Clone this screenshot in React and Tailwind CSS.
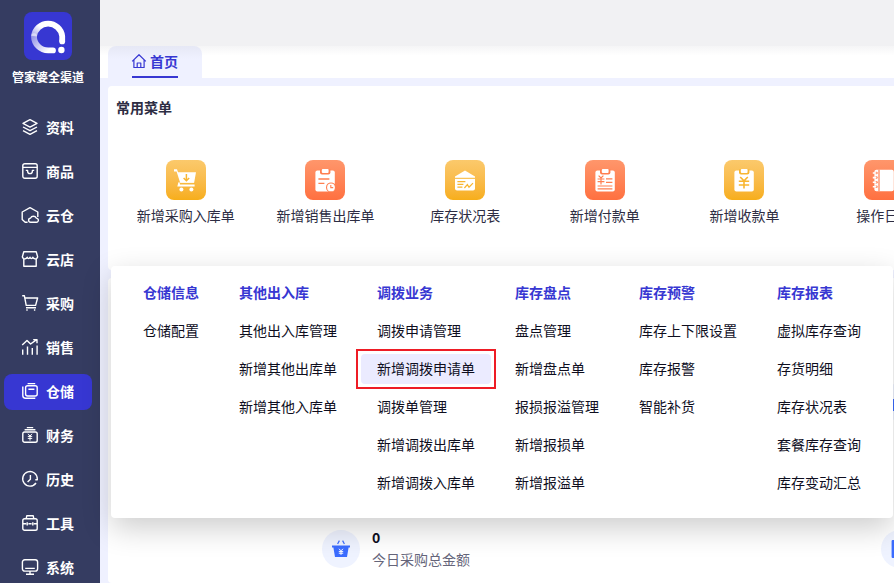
import React from 'react';

const quickLinks = [
  { label: '新增采购入库单', icon: 'purchase', tone: 'amber' },
  { label: '新增销售出库单', icon: 'sale', tone: 'orange' },
  { label: '库存状况表', icon: 'stock', tone: 'amber' },
  { label: '新增付款单', icon: 'pay', tone: 'orange' },
  { label: '新增收款单', icon: 'receive', tone: 'amber' },
  { label: '操作日志', icon: 'log', tone: 'orange' },
];

const menuGroups = [
  { title: '仓储信息', items: ['仓储配置'] },
  { title: '其他出入库', items: ['其他出入库管理', '新增其他出库单', '新增其他入库单'] },
  { title: '调拨业务', items: ['调拨申请管理', '新增调拨申请单', '调拨单管理', '新增调拨出库单', '新增调拨入库单'] },
  { title: '库存盘点', items: ['盘点管理', '新增盘点单', '报损报溢管理', '新增报损单', '新增报溢单'] },
  { title: '库存预警', items: ['库存上下限设置', '库存报警', '智能补货'] },
  { title: '库存报表', items: ['虚拟库存查询', '存货明细', '库存状况表', '套餐库存查询', '库存变动汇总'] },
];

const navItems = [
  {
    label: '资料',
    icon: (
      <>
        <path d="M8 .7 15 4.4 8 8.1 1 4.4z" />
        <path d="M1 8l7 3.7L15 8M1 11.6l7 3.7 7-3.7" />
      </>
    ),
  },
  {
    label: '商品',
    icon: (
      <>
        <rect x=".8" y=".7" width="14.4" height="14.6" rx="2" />
        <path d="M1 4.4h14M3.8 7.4h1.8v.8a2.4 2.4 0 0 0 4.8 0v-.8h1.8" />
      </>
    ),
  },
  {
    label: '云仓',
    icon: (
      <>
        <path d="M5.6 15.3H3.2L.2 12.4V5L8 .7 15.8 5v5" />
        <path d="M8.8 15.3a2.1 2.1 0 0 1-.2-4.2 3 3 0 0 1 5.6 0 2.1 2.1 0 0 1 .2 4.2z" />
      </>
    ),
  },
  {
    label: '云店',
    icon: (
      <>
        <path d="M2.2 7.6C.8 7.2.2 6.6.4 5.6L1.8.7h12.4l1.4 4.9c.2 1-.4 1.6-1.8 2" />
        <path d="M2.2 7.6c1.2.4 2.4-.2 3-1.4.8 1.8 2 1.8 2.8 0 .8 1.8 2 1.8 2.8 0 .6 1.2 1.8 1.8 3 1.4M1.8 8v7.3h12.4V8" />
      </>
    ),
  },
  {
    label: '采购',
    icon: (
      <>
        <path d="M.2.8h2.2l1.8 9.6h9.4L15.6 3H3M4 12.8h10" />
        <path d="M5 14.2v1.6M12.6 14.2v1.6" />
      </>
    ),
  },
  {
    label: '销售',
    icon: (
      <>
        <path d="M.2 6 5 1.4l3.6 3.6L14.6.6M11.2.6h3.8v3.6" />
        <path d="M.7 10.4v5.4M5.5 7.4v8.4M10.3 9v6.8M15.1 6.6v9.2" />
      </>
    ),
  },
  {
    label: '仓储',
    icon: (
      <>
        <rect x="3.6" y="2.8" width="11.6" height="10.2" rx="2" />
        <path d="M5.6.6h7.6M.8 3.4v9.2a2.7 2.7 0 0 0 2.7 2.7h9.8M6.4 6.2h6" />
      </>
    ),
  },
  {
    label: '财务',
    icon: (
      <>
        <path d="M4.8.6h6.4M2.6 2.8h10.8" />
        <rect x=".8" y="5" width="14.4" height="10.3" rx="1.8" />
        <path d="M6 6.8l2 2.2 2-2.2M8 9v4.6M5.8 9.4h4.4M5.8 11.4h4.4" strokeWidth="1" />
      </>
    ),
  },
  {
    label: '历史',
    icon: (
      <>
        <path d="M14 12A7.3 7.3 0 1 1 15.3 8v.8h-2" />
        <path d="M8.4 4v4.2L5.6 11" />
      </>
    ),
  },
  {
    label: '工具',
    icon: (
      <>
        <path d="M4.2 3.6 4.8.7h6.4l.6 2.9" />
        <rect x=".8" y="3.8" width="14.4" height="11.5" rx="1.8" />
        <path d="M1 8.8h3.2M6.4 8.8h3.2M11.8 8.8H15M5.2 7.2v3.2M10.8 7.2v3.2" />
      </>
    ),
  },
  {
    label: '系统',
    icon: (
      <>
        <rect x=".4" y=".7" width="15.2" height="11.4" rx="2.4" />
        <path d="M3.2 9.4h9.6M8 12v3M4 15.3h8" />
      </>
    ),
  },
];

const App = () => (
  <div className="flex h-screen overflow-hidden bg-[#eff1ff] font-['Noto_Sans_CJK_SC',sans-serif] text-sm">
    <Sidebar />
    <main className="relative flex min-w-0 flex-1 flex-col">
      <header className="h-[46px] shrink-0 bg-[#f1f1f3]" />
      <TabBar />
      <div className="flex flex-1 flex-col gap-2 overflow-hidden pl-2 pt-2">
        <QuickMenu />
        <Overview />
      </div>
      <MegaMenu />
    </main>
  </div>
);

const Sidebar = () => (
  <aside className="flex w-[100px] shrink-0 flex-col bg-[#353c61] text-white">
    <div className="flex flex-col items-center pr-1 pt-3">
      <Logo />
      <div className="mt-[7px] text-xs font-bold leading-5">管家婆全渠道</div>
    </div>
    <nav className="mt-[23px] flex flex-col gap-2 pl-1 pr-2">
      {navItems.map((item) => (
        <a
          key={item.label}
          href="#"
          className={`flex h-9 shrink-0 items-center gap-2 rounded-lg pb-0.5 pl-[18px] font-bold ${
            item.label === '仓储' ? 'bg-[#3737d2]' : ''
          }`}
        >
          <svg viewBox="0 0 16 16" className="size-4 overflow-visible fill-none stroke-current" strokeWidth="1.4" strokeLinejoin="round">
            {item.icon}
          </svg>
          {item.label}
        </a>
      ))}
    </nav>
  </aside>
);

const Logo = () => (
  <svg viewBox="0 0 48 48" className="size-12">
    <defs>
      <linearGradient id="ring" gradientUnits="userSpaceOnUse" x1="11" y1="24" x2="25" y2="38">
        <stop offset="0" stopColor="#fff" stopOpacity=".5" />
        <stop offset="1" stopColor="#fff" />
      </linearGradient>
      <linearGradient id="ring-top" gradientUnits="userSpaceOnUse" x1="8" y1="28" x2="17" y2="15">
        <stop offset="0" stopColor="#fff" stopOpacity=".4" />
        <stop offset="1" stopColor="#fff" />
      </linearGradient>
    </defs>
    <rect width="48" height="48" rx="8" fill="#3737d2" />
    <path d="M29 38.4H24.2A14.2 14.2 0 0 1 10 24.2" fill="none" stroke="url(#ring)" strokeWidth="5.8" strokeLinecap="round" />
    <path d="M10 24.2A14.2 14.2 0 0 1 38.2 24.2V29.4" fill="none" stroke="url(#ring-top)" strokeWidth="5.8" />
    <circle cx="38.2" cy="29.4" r="2.9" fill="#fff" />
    <circle cx="37.4" cy="38" r="3.2" fill="#fff" />
  </svg>
);

const TabBar = () => (
  <div className="flex h-8 shrink-0 bg-linear-to-b from-[#f5f5f6] to-white to-30% pl-2">
    <a href="#" className="flex w-[94px] justify-center rounded-t-lg bg-linear-to-b from-[#e6e8f5] to-[#eff1ff] to-40% font-bold text-[#3737d2]">
      <span className="flex h-8 items-center gap-1 border-b-2 border-[#3737d2]">
        <svg viewBox="0 0 14 14" className="size-[14px] overflow-visible fill-none stroke-current" strokeWidth="1.2" strokeLinejoin="round">
          <path d="M.2 7.4 7 .7l6.8 6.7M1.9 6v7.5h10.2V6M5.2 13.4V9h3.6v4.4" />
        </svg>
        首页
      </span>
    </a>
  </div>
);

const QuickMenu = () => (
  <section className="h-[184px] shrink-0 overflow-hidden rounded-l bg-white px-2 pt-[11px]">
    <h2 className="font-bold leading-5 text-[#2d2d43]">常用菜单</h2>
    <div className="mt-[43px] grid w-[838px] grid-cols-6">
      {quickLinks.map((link) => (
        <a key={link.label} href="#" className="flex flex-col items-center gap-[5px] leading-5 text-[#2d2d43]">
          <span
            className={`flex size-10 items-center justify-center rounded-lg bg-linear-to-b ${
              link.tone === 'amber' ? 'from-[#fbc96b] to-[#f7ae18]' : 'from-[#ff966b] to-[#ff7040]'
            }`}
          >
            <QuickIcon name={link.icon} color={link.tone === 'amber' ? '#f8b631' : '#ff7f50'} />
          </span>
          {link.label}
        </a>
      ))}
    </div>
  </section>
);

const QuickIcon = ({ name, color }) => (
  <svg viewBox="0 0 24 24" className="size-6" fill="#fff">
    {name === 'purchase' && (
      <>
        <path d="M0 1.2h3l1 3h18l-2 11.4H6.4L2.6 3.4H0z" />
        <path d="M5.4 14.4 4.6 17.4h16" fill="none" stroke="#fff" strokeWidth="2" />
        <circle cx="7.4" cy="21.6" r="2" />
        <circle cx="17.4" cy="21.6" r="2" />
        <path d="M5.8 15.4h15" stroke={color} strokeWidth="1" />
        <path d="M12.4 6v6.6M9.6 10l2.8 2.8 2.8-2.8" fill="none" stroke={color} strokeWidth="1.5" />
      </>
    )}
    {(name === 'sale' || name === 'pay' || name === 'receive') && (
      <>
        <rect x="2.4" y="2.4" width="19.4" height="21" rx="2" />
        <path d="M7 1.5v3a2 2 0 0 0 2 2h6.4a2 2 0 0 0 2-2v-3z" fill={color} />
        <rect x="8.8" y="1" width="6.8" height="4" rx="1" />
      </>
    )}
    {name === 'sale' && (
      <>
        <path d="M5.4 11h11M5.4 15.4h6" stroke={color} strokeWidth="1.4" />
        <circle cx="18" cy="19.4" r="5" fill={color} />
        <circle cx="18" cy="19.4" r="3.9" />
        <path d="M17.8 17v2.6h2.4" fill="none" stroke={color} strokeWidth="1.1" />
      </>
    )}
    {name === 'pay' && (
      <path
        d="M5.6 7.6 8 10l2.4-2.4M8 10v6.4M4.6 11h6.8M4.6 13.6h6.8M13 10.8h6.4M13 14.4h6.4M4.6 18h14.8M4.6 20.8h14.8"
        fill="none"
        stroke={color}
        strokeWidth="1.2"
      />
    )}
    {name === 'receive' && (
      <path d="M8.2 9 12 12.8 15.8 9M12 12.8v7.8M6.8 13.2h10.4M6.8 17h10.4" fill="none" stroke={color} strokeWidth="1.6" />
    )}
    {name === 'stock' && (
      <>
        <path d="M12 2.4 22 8.4v12.2a2 2 0 0 1-2 2H4a2 2 0 0 1-2-2V8.4z" />
        <path d="M2 10.3h20" stroke={color} strokeWidth="1" />
        <path d="M4.4 13.6h8M4.4 16.4h6M4.4 19.2h5M11.4 20l3-3.4 1.6 2.6 4-4" fill="none" stroke={color} strokeWidth="1.2" />
      </>
    )}
    {name === 'log' && (
      <>
        <rect x="2.4" y="1.8" width="19.4" height="21.4" rx="2" />
        <path d="M7 1.8v21.4" stroke={color} strokeWidth="1.2" />
        {[5, 9.6, 14.2, 18.8].map((y) => (
          <g key={y}>
            <circle cx="4.4" cy={y} r="1.3" fill={color} />
            <path d={`M.8 ${y}h3.6`} stroke="#fff" strokeWidth="1.6" />
          </g>
        ))}
      </>
    )}
  </svg>
);

const Overview = () => (
  <section className="flex flex-1 flex-col gap-[106px] overflow-hidden rounded-l bg-white pt-[105px]">
    <div className="flex pl-[773px]">
      <StatBadge>
        <path d="M2 7h16v12H2zM5 3h10v2H5z" fill="#3b6cff" />
      </StatBadge>
    </div>
    <div className="flex items-center pl-[214px]">
      <div className="flex w-[559px] shrink-0 items-center gap-3">
        <StatBadge>
          <path d="M6.6 5 8.4 1.6M13.4 5l-1.8-3.4" stroke="#3b6cff" strokeWidth="1.2" />
          <path d="M1 6.4h18v2h-1.4L16 18H4L2.4 8.4H1z" fill="#3b6cff" />
          <path d="M8 9.8l2 2 2-2M10 11.8v4M7.8 12.4h4.4M7.8 14.2h4.4" fill="none" stroke="#fff" />
        </StatBadge>
        <div>
          <div className="font-bold leading-5 text-[#0e0e1e]">0</div>
          <div className="leading-6 text-[#65657a]">今日采购总金额</div>
        </div>
      </div>
      <StatBadge>
        <rect x="1.6" y="1" width="16" height="18" rx="1" fill="#3b6cff" />
      </StatBadge>
    </div>
  </section>
);

const StatBadge = ({ children }) => (
  <div className="flex size-[38px] shrink-0 items-center justify-center rounded-full bg-[#eff3ff]">
    <svg viewBox="0 0 20 20" className="size-5">
      {children}
    </svg>
  </div>
);

const MegaMenu = () => (
  <div className="absolute left-[11px] right-px top-[266px] flex gap-2 rounded-sm bg-white px-4 pb-5 pt-3 shadow-[0_10px_30px_rgba(0,0,0,0.2)]">
    {menuGroups.map((group) => (
      <div key={group.title} className="flex shrink-0 flex-col gap-2">
        <h3 className="px-4 pb-0.5 font-bold leading-7 text-[#3737d2]">{group.title}</h3>
        {group.items.map((item) => (
          <MenuLink key={item} label={item} active={item === '新增调拨申请单'} />
        ))}
      </div>
    ))}
  </div>
);

const MenuLink = ({ label, active }) => (
  <a href="#" className={`relative rounded px-4 pb-0.5 leading-7 text-[#0e0e1e] ${active ? 'bg-[#ebebff]' : ''}`}>
    {label}
    {active && <span className="absolute -inset-[5px] border-2 border-[#ee1c25]" />}
  </a>
);

export default App;
